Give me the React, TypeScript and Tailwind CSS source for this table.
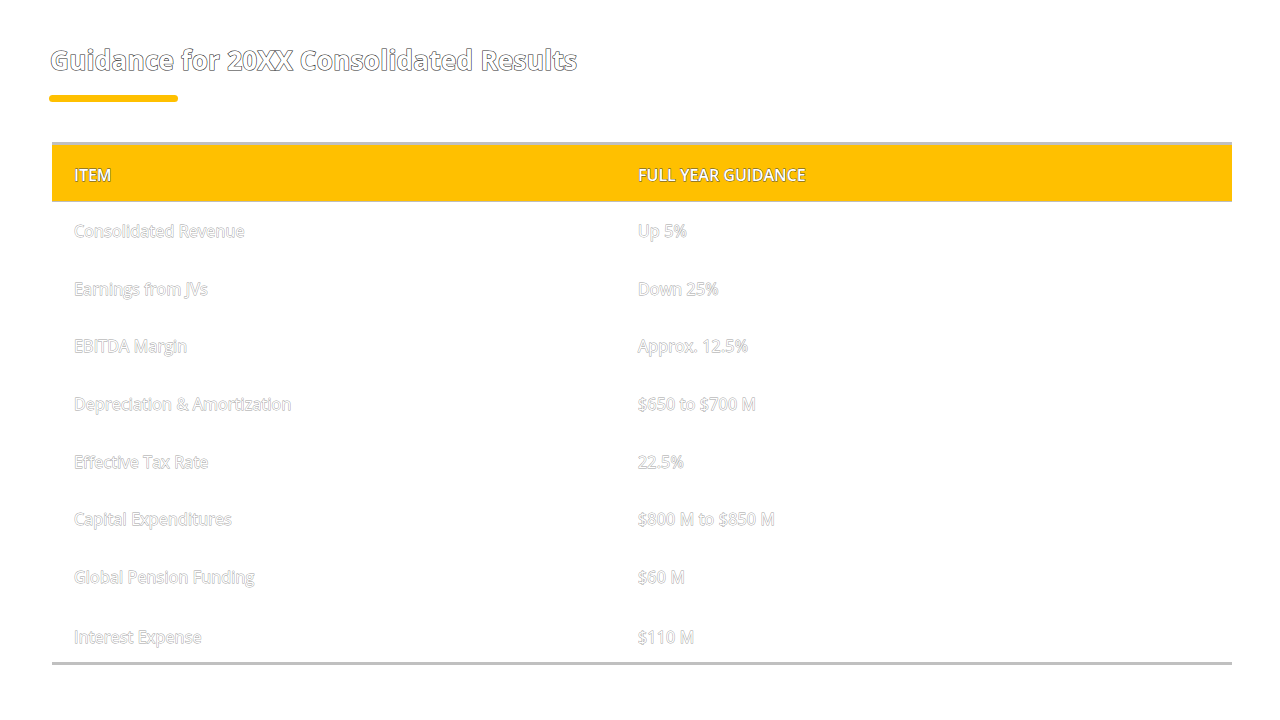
import React from "react";

const rows: [string, string][] = [
    ["Consolidated Revenue", "Up 5%"],
    ["Earnings from JVs", "Down 25%"],
    ["EBITDA Margin", "Approx. 12.5%"],
    ["Depreciation & Amortization", "$650 to $700 M"],
    ["Effective Tax Rate", "22.5%"],
    ["Capital Expenditures", "$800 M to $850 M"],
    ["Global Pension Funding", "$60 M"],
];

const App: React.FC = () => {
    return (
        <div className="w-[1280px] h-[720px] bg-white font-['Open_Sans',sans-serif] text-white">
            <div className="pt-[42px] px-[50px]">
                <h1 className="text-[26px] leading-[36px] font-bold tracking-[0.3px] [-webkit-text-stroke:1.2px_#2a2a2a] [paint-order:stroke_fill]">
                    Guidance for 20XX Consolidated Results
                </h1>
                <div className="mt-[17px] -ml-px w-[129px] h-[7px] rounded-full bg-[#FFC000]"></div>
            </div>

            <div className="mt-[40px] ml-[52px] mr-[48px] border-t-[3px] border-b-[3px] border-[#c0c0c0]">
                <div className="flex h-[57px] pt-[4px] items-center bg-[#FFC000] border-b border-[#bdbdbd] text-[16px] font-semibold uppercase [-webkit-text-stroke:0.8px_#444] [paint-order:stroke_fill]">
                    <div className="w-[586px] pl-[22px]">Item</div>
                    <div className="flex-1">Full Year Guidance</div>
                </div>
                {rows.map(([item, value]) => (
                    <div
                        key={item}
                        className="flex h-[57.7px] items-center text-[16px] tracking-[0.2px] [-webkit-text-stroke:0.9px_#a0a0a0] [paint-order:stroke_fill]"
                    >
                        <div className="w-[586px] pl-[22px]">{item}</div>
                        <div className="flex-1">{value}</div>
                    </div>
                ))}
                <div className="flex h-[56px] pt-[6px] items-center text-[16px] tracking-[0.2px] [-webkit-text-stroke:0.9px_#a0a0a0] [paint-order:stroke_fill]">
                    <div className="w-[586px] pl-[22px]">Interest Expense</div>
                    <div className="flex-1">$110 M</div>
                </div>
            </div>
        </div>
    );
};

export default App;
